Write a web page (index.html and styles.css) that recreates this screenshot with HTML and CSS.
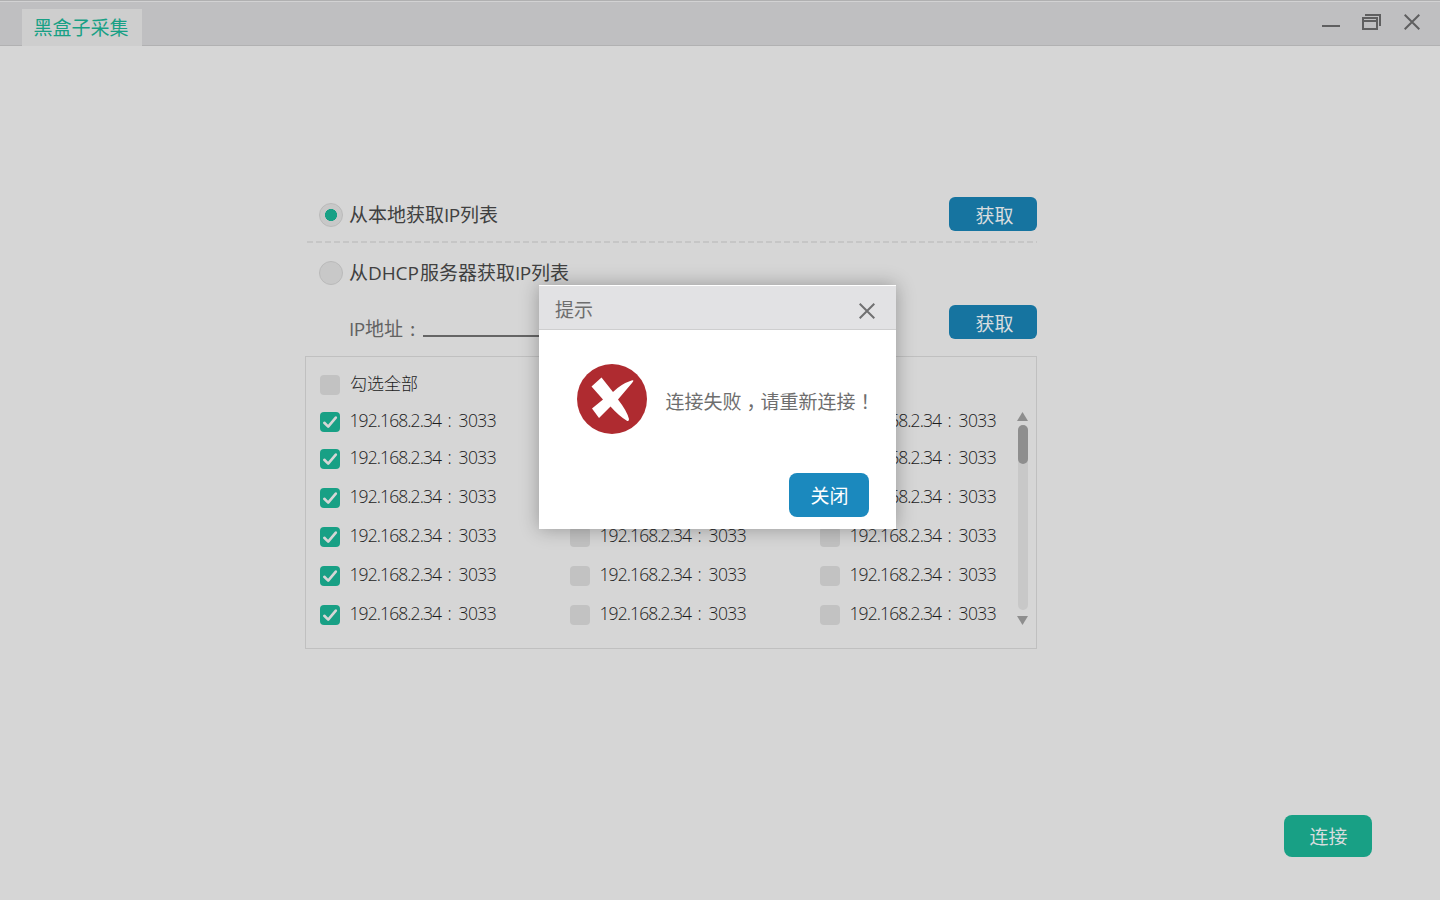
FILE: index.html
```html
<!DOCTYPE html>
<html lang="zh-CN">
<head>
<meta charset="utf-8">
<title>黑盒子采集</title>
<link rel="stylesheet" href="styles.css">
</head>
<body>
<svg class="defs" width="0" height="0" aria-hidden="true">
  <symbol id="tick" viewBox="0 0 20 20"><path d="M4.3 10.8 8.2 14.600 15.800 5.600" fill="none" stroke="#d6d6d6" stroke-width="2.600" stroke-linecap="round" stroke-linejoin="round"/></symbol>
</svg>
<header class="titlebar">
  <div class="tab">黑盒子采集</div>
  <div class="controls">
    <svg width="18" height="18" viewBox="0 0 18 18"><path d="M0 13h18" stroke="#5f5f60" stroke-width="2"/></svg>
    <svg width="20" height="18" viewBox="0 0 20 18" fill="none" stroke="#5f5f60" stroke-width="2"><path d="M1 5h14v11H1zM1 8h14M3 2h15v11"/></svg>
    <svg width="16" height="18" viewBox="0 0 16 18"><path d="M.7 1.700 15.300 16.300M15.300 1.700.7 16.300" stroke="#5f5f60" stroke-width="2"/></svg>
  </div>
</header>
<main class="panel">
  <div class="option first">
    <span class="radio on"></span><span class="option-text">从本地获取<span class="lat ip">IP</span>列表</span>
    <button class="fetch">获取</button>
  </div>
  <svg class="divider" width="730" height="2"><path d="M0 1h730" stroke="#c6c6c6" stroke-width="2" stroke-dasharray="6 3"/></svg>
  <div class="option second">
    <span class="radio"></span><span class="option-text">从<span class="lat dhcp">DHCP</span>服务器获取<span class="lat ip">IP</span>列表</span>
  </div>
  <div class="address">
    <span class="address-text"><span class="lat ip">IP</span>地址</span><span class="address-colon">:</span><span class="field"></span>
    <button class="fetch">获取</button>
  </div>
  <section class="list">
    <div class="all"><span class="box"></span><span class="all-text">勾选全部</span></div>
    <div class="grid">
      <div class="column">
        <div class="item"><svg class="box on"><use href="#tick"/></svg><span class="host">192.168.2.34</span><span class="colon">:</span><span class="port">3033</span></div>
        <div class="item"><svg class="box on"><use href="#tick"/></svg><span class="host">192.168.2.34</span><span class="colon">:</span><span class="port">3033</span></div>
        <div class="item"><svg class="box on"><use href="#tick"/></svg><span class="host">192.168.2.34</span><span class="colon">:</span><span class="port">3033</span></div>
        <div class="item"><svg class="box on"><use href="#tick"/></svg><span class="host">192.168.2.34</span><span class="colon">:</span><span class="port">3033</span></div>
        <div class="item"><svg class="box on"><use href="#tick"/></svg><span class="host">192.168.2.34</span><span class="colon">:</span><span class="port">3033</span></div>
        <div class="item"><svg class="box on"><use href="#tick"/></svg><span class="host">192.168.2.34</span><span class="colon">:</span><span class="port">3033</span></div>
      </div>
      <div class="column low">
        <div class="item"><span class="box"></span><span class="host">192.168.2.34</span><span class="colon">:</span><span class="port">3033</span></div>
        <div class="item"><span class="box"></span><span class="host">192.168.2.34</span><span class="colon">:</span><span class="port">3033</span></div>
        <div class="item"><span class="box"></span><span class="host">192.168.2.34</span><span class="colon">:</span><span class="port">3033</span></div>
      </div>
      <div class="column">
        <div class="item"><span class="box"></span><span class="host">192.168.2.34</span><span class="colon">:</span><span class="port">3033</span></div>
        <div class="item"><span class="box"></span><span class="host">192.168.2.34</span><span class="colon">:</span><span class="port">3033</span></div>
        <div class="item"><span class="box"></span><span class="host">192.168.2.34</span><span class="colon">:</span><span class="port">3033</span></div>
        <div class="item"><span class="box"></span><span class="host">192.168.2.34</span><span class="colon">:</span><span class="port">3033</span></div>
        <div class="item"><span class="box"></span><span class="host">192.168.2.34</span><span class="colon">:</span><span class="port">3033</span></div>
        <div class="item"><span class="box"></span><span class="host">192.168.2.34</span><span class="colon">:</span><span class="port">3033</span></div>
      </div>
      <div class="scroll">
        <svg width="12" height="9" viewBox="0 0 12 9"><path d="M5.500 0 11 9H0z" fill="#8e8e8e"/></svg>
        <div class="track"><div class="thumb"></div></div>
        <svg width="12" height="9" viewBox="0 0 12 9"><path d="M0 0h11L5.500 9z" fill="#8e8e8e"/></svg>
      </div>
    </div>
  </section>
</main>
<footer class="footer"><button class="connect">连接</button></footer>
<div class="dialog" role="dialog">
  <div class="dialog-head">
    <span>提示</span>
    <svg width="16" height="16" viewBox="0 0 16 16"><path d="M.7.7 15.300 15.300M15.300.7.7 15.300" stroke="#707071" stroke-width="2"/></svg>
  </div>
  <div class="dialog-body">
    <svg width="70" height="70" viewBox="0 0 70 70"><circle cx="35" cy="35" r="35" fill="#af2b30"/><path d="M24.500 13.500 36 28Q44 20 54.500 16.500Q58 15.500 55 19L41 35.500Q50 47 52 55Q52 58 49.500 56.500Q42 52 33.500 42.500L22 54 15 44.500 26 35.500 14.500 22.500Z" fill="#fff"/></svg>
    <span class="message">连接失败<span class="mark">，</span>请重新连接<span class="mark">！</span></span>
  </div>
  <div class="dialog-foot"><button class="close">关闭</button></div>
</div>
</body>
</html>
```
FILE: styles.css
```css
* { box-sizing: border-box; }
body {
  margin: 0;
  width: 1440px;
  height: 900px;
  overflow: hidden;
  display: flex;
  flex-direction: column;
  position: relative;
  background: #d6d6d6;
  color: #404040;
  font: 19px/24px "Noto Sans CJK SC", sans-serif;
}
.defs { position: absolute; }
svg { display: block; flex: none; }
button {
  border: 0;
  padding: 0;
  font: inherit;
  color: #d8dddf;
  text-align: center;
}
.titlebar {
  height: 46px;
  flex: none;
  display: flex;
  justify-content: space-between;
  padding: 0 20px 0 22px;
  background: linear-gradient(#b0b0b1 0 1px, #d2d2d3 1px 2px, #bfbfc1 2px 45px, #b1b1b2 45px);
}
.tab {
  width: 120px;
  height: 37px;
  margin-top: 9px;
  padding: 6px 0 0 11.500px;
  background: #cecece;
  color: #18a085;
  white-space: nowrap;
}
.controls { display: flex; gap: 22px; padding-top: 13px; }
.panel {
  width: 732px;
  margin: 151px 0 0 305px;
  display: flex;
  flex-direction: column;
}
.option, .address { display: flex; align-items: flex-start; }
.first { height: 44px; padding-left: 14px; }
.first .radio { margin-top: 6px; }
.first .option-text { margin-top: 5px; }
.second { height: 64px; padding: 18px 0 0 14px; }
.radio {
  width: 24px;
  height: 24px;
  flex: none;
  border: 1px solid #bababa;
  border-radius: 50%;
  background: #c8c8c8;
}
.radio.on { background: radial-gradient(circle, #18a085 0 5.700px, #c8c8c8 6.300px); }
.option-text { margin-left: 6px; white-space: nowrap; }
.second .option-text { margin-top: -1px; }
.lat { display: inline-block; font-family: "Open Sans", sans-serif; white-space: nowrap; }
.ip { width: 16px; font-size: 19px; letter-spacing: -.6px; }
.dhcp { width: 52px; font-size: 19px; letter-spacing: -.1px; }
.fetch {
  width: 88px;
  height: 34px;
  margin-left: auto;
  padding: 2px 0 0 3px;
  border-radius: 6px;
  background: #1674a0;
}
.divider { margin-left: 2px; }
.address { height: 49px; margin-top: -2px; padding-left: 44px; color: #626262; }
.address-text { margin-top: 11px; width: 61px; white-space: nowrap; }
.address-colon { margin-top: 11px; width: 13px; }
.field { width: 250px; height: 2px; margin-top: 30px; background: #656565; }
.list {
  width: 732px;
  height: 293px;
  margin-top: 2px;
  padding: 18px 8px 0 14px;
  border: 1px solid #c0c0c0;
}
.all { height: 37px; display: flex; gap: 10px; }
.all-text { font-size: 17px; line-height: 20px; font-weight: 300; color: #222; margin-top: -2px; }
.grid { display: grid; grid-template-columns: 250px 250px 197px 12px; }
.column { display: flex; flex-direction: column; gap: 19px; }
.column .item:first-child { margin-bottom: -2px; }
.column.low { padding-top: 115px; }
.column.low .item:first-child { margin-bottom: 0; }
.box { width: 20px; height: 20px; flex: none; border-radius: 4px; background: #c2c2c2; }
.box.on { background: #18a085; }
.item {
  display: flex;
  height: 20px;
  color: #1c1c1c;
  font: 300 17.500px/20px "Open Sans", sans-serif;
  white-space: nowrap;
}
.item span:not(.box) { margin-top: -2px; }
.host { width: 98px; margin-left: 9.500px; letter-spacing: -.9px; }
.colon { width: 11px; }
.port { letter-spacing: -.6px; }
.scroll { display: flex; flex-direction: column; align-items: center; gap: 4px; height: 214px; }
.track { width: 10px; height: 185px; border-radius: 5px; background: #c8c8c8; }
.track + svg { margin-top: 2px; }
.thumb { width: 10px; height: 39px; border-radius: 5px; background: #8e8e8e; }
.footer { display: flex; justify-content: flex-end; margin-top: auto; padding: 0 68px 43px 0; }
.connect { width: 88px; height: 42px; border-radius: 8px; background: #18a085; padding: 0 0 1px 1px; }
.dialog {
  position: absolute;
  left: 539px;
  top: 285px;
  width: 357px;
  height: 244px;
  display: flex;
  flex-direction: column;
  background: #fff;
  color: #6e6e6e;
  box-shadow: 0 0 18px rgba(0, 0, 0, .3);
}
.dialog-head {
  height: 45px;
  flex: none;
  display: flex;
  justify-content: space-between;
  padding: 12px 21px 0 16px;
  background: linear-gradient(#fff 0 1px, #e2e2e4 1px 44px, #cececf 44px);
}
.dialog-head svg { margin-top: 6px; }
.dialog-body { display: flex; padding: 34px 0 0 38px; }
.message { margin: 25px 0 0 18.500px; white-space: nowrap; }
.mark { display: inline-block; width: 19px; text-indent: 5px; }
.dialog-foot { display: flex; justify-content: flex-end; padding: 39px 27px 0 0; }
.close { width: 80px; height: 44px; border-radius: 8px; background: #1b89be; color: #fff; padding: 0 0 1px 1px; }
```
